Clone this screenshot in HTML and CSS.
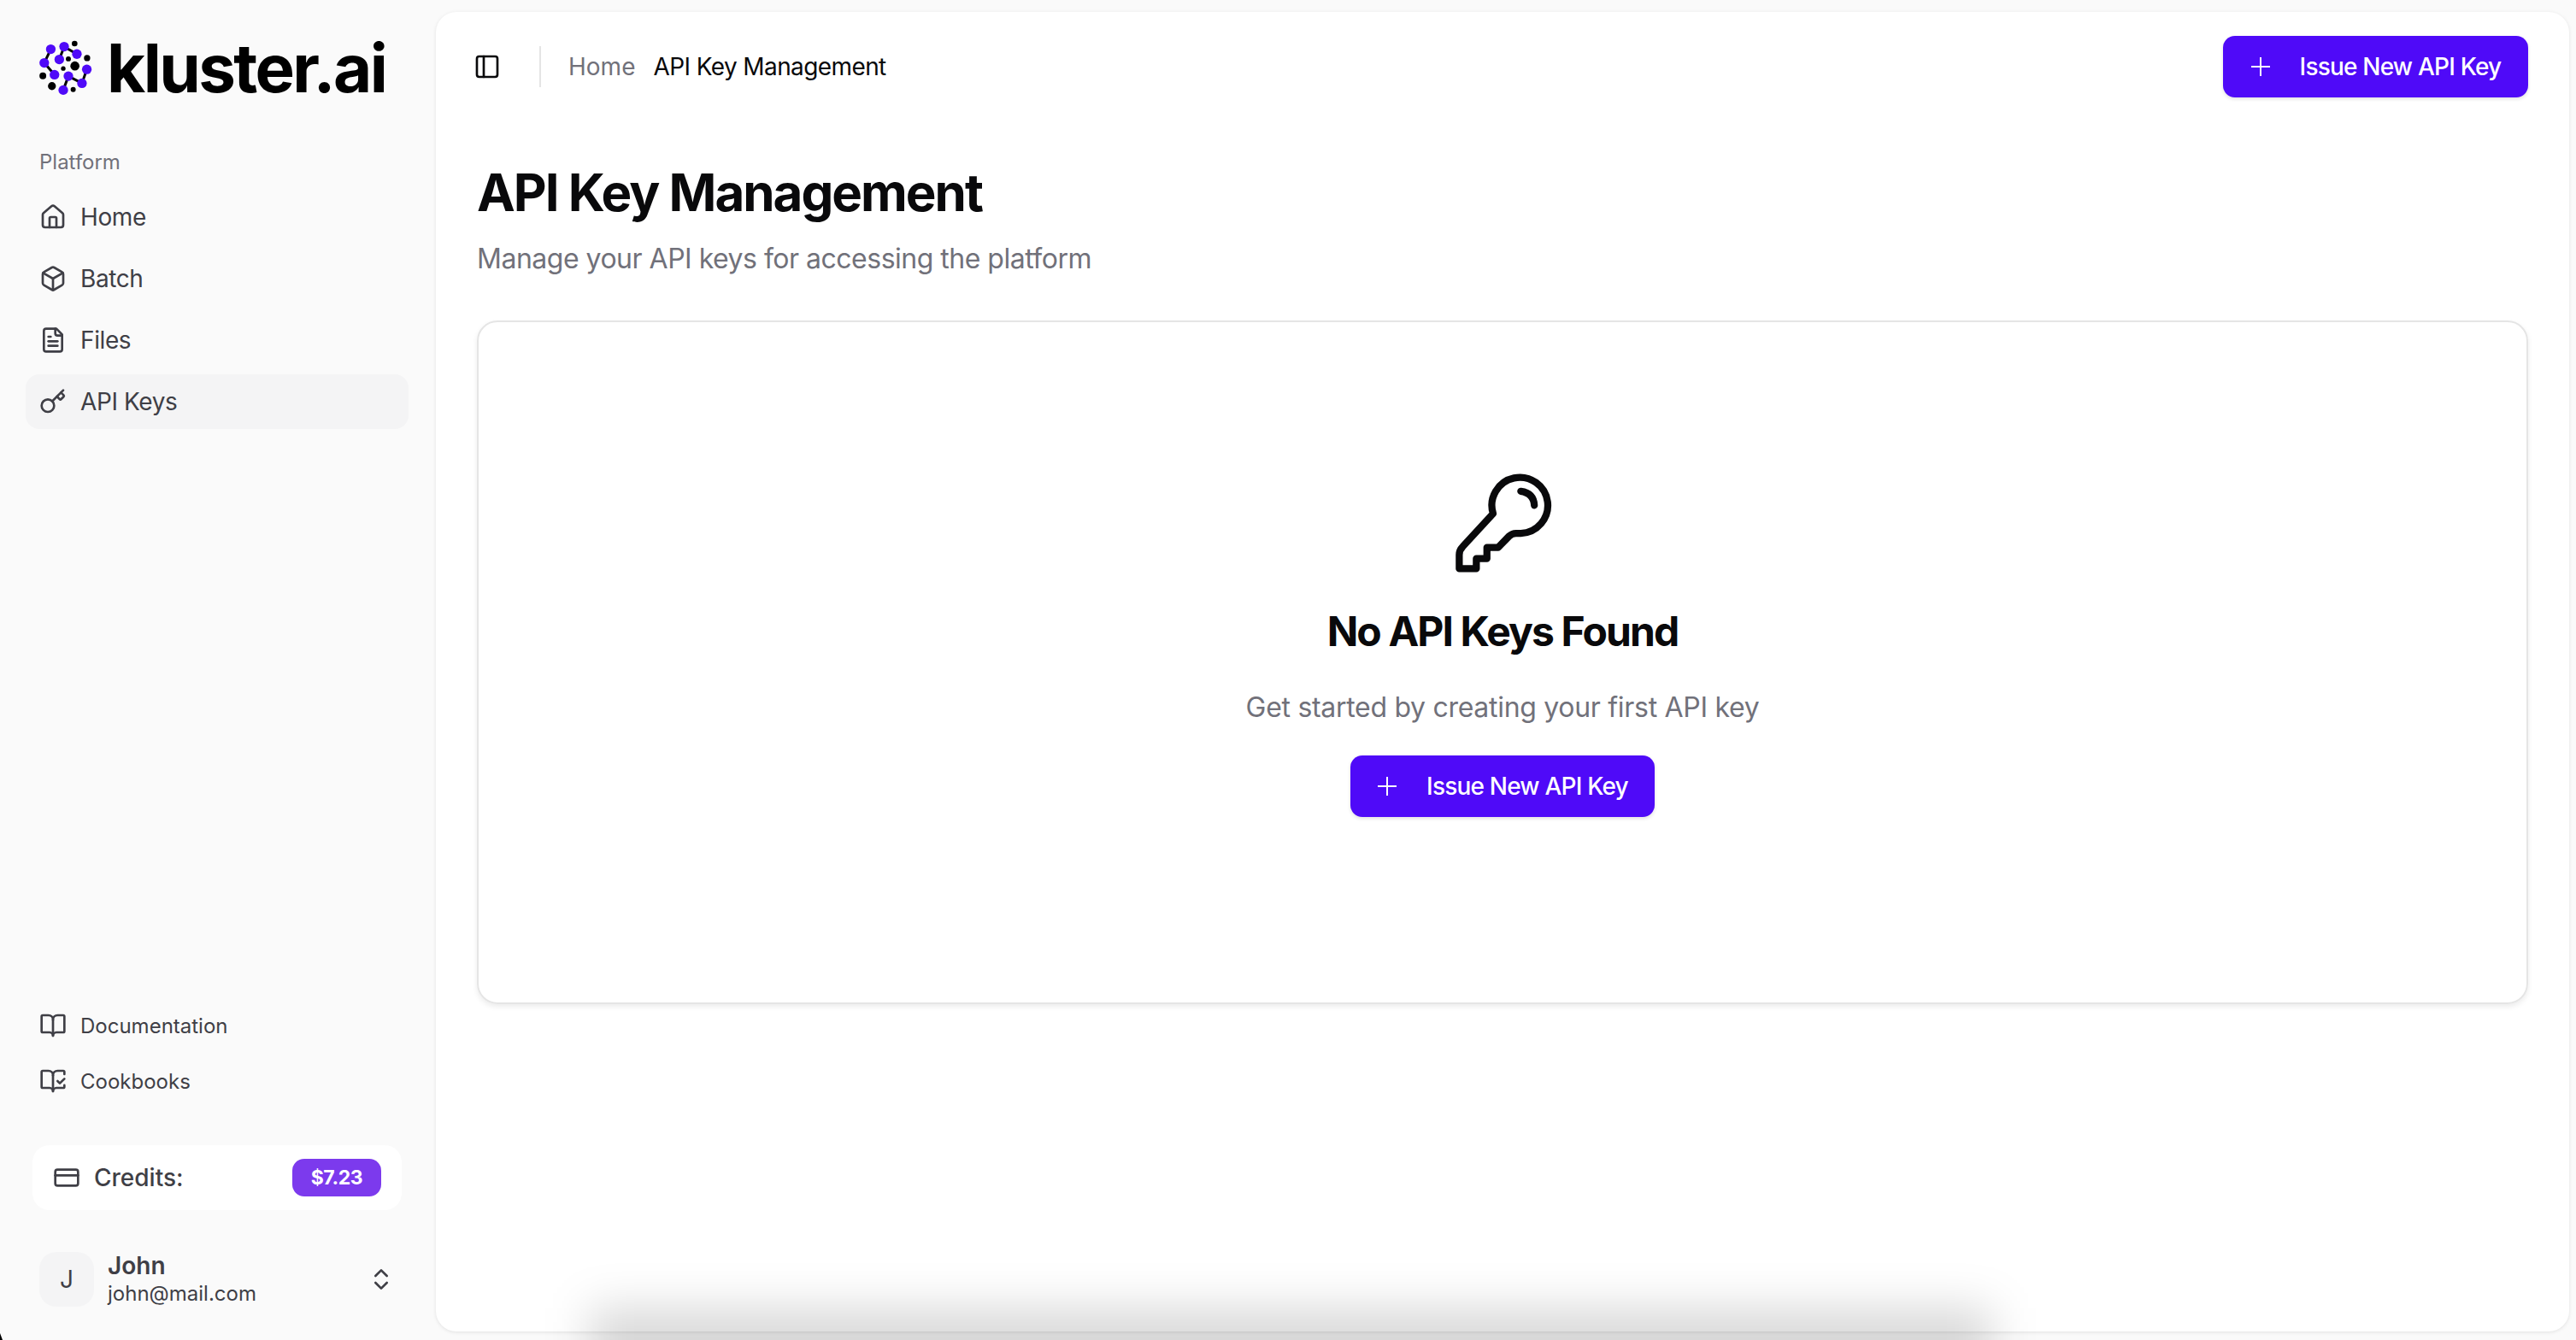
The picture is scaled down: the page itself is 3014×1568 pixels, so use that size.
FILE: index.html
```html
<!DOCTYPE html>
<html lang="en">
<head>
    <meta charset="UTF-8">
    <meta name="viewport" content="width=device-width, initial-scale=1.0">
    <title>API Key Management</title>
    <link rel="stylesheet" href="styles.css">
</head>
<body>
    <div class="app">
        <aside class="sidebar">
            <div class="brand">
                <svg class="brand-mark" viewBox="30 30 240 220">
                    <g stroke="#000" stroke-width="9" fill="none">
                        <path d="M88 77 65 125 101 167"/>
                        <path d="M118 113 135 68 180 94"/>
                        <path d="M132 221 150 172 198 197 215 148"/>
                    </g>
                    <g fill="#000">
                        <circle cx="172" cy="57" r="10"/>
                        <circle cx="216" cy="108" r="11"/>
                        <circle cx="150" cy="111" r="9"/>
                        <circle cx="173" cy="136" r="16"/>
                        <circle cx="132" cy="145" r="8"/>
                        <circle cx="60" cy="171" r="12"/>
                        <circle cx="92" cy="207" r="14"/>
                        <circle cx="167" cy="219" r="9"/>
                    </g>
                    <g fill="#4f0af8">
                        <circle cx="88" cy="77" r="17"/>
                        <circle cx="135" cy="68" r="17"/>
                        <circle cx="180" cy="94" r="17"/>
                        <circle cx="118" cy="113" r="17"/>
                        <circle cx="65" cy="125" r="17"/>
                        <circle cx="101" cy="167" r="17"/>
                        <circle cx="150" cy="172" r="17"/>
                        <circle cx="215" cy="148" r="17"/>
                        <circle cx="198" cy="197" r="17"/>
                        <circle cx="132" cy="221" r="17"/>
                    </g>
                </svg>
                <span class="brand-name">kluster.ai</span>
            </div>

            <div class="nav-label">Platform</div>
            <nav class="nav">
                <a class="nav-item">
                    <svg class="icon" viewBox="0 0 24 24"><path d="M15 21v-8a1 1 0 0 0-1-1h-4a1 1 0 0 0-1 1v8"/><path d="M3 10a2 2 0 0 1 .709-1.528l7-5.999a2 2 0 0 1 2.582 0l7 5.999A2 2 0 0 1 21 10v9a2 2 0 0 1-2 2H5a2 2 0 0 1-2-2z"/></svg>
                    Home
                </a>
                <a class="nav-item">
                    <svg class="icon" viewBox="0 0 24 24"><path d="M21 8a2 2 0 0 0-1-1.73l-7-4a2 2 0 0 0-2 0l-7 4A2 2 0 0 0 3 8v8a2 2 0 0 0 1 1.73l7 4a2 2 0 0 0 2 0l7-4A2 2 0 0 0 21 16Z"/><path d="m3.3 7 8.7 5 8.7-5"/><path d="M12 22V12"/></svg>
                    Batch
                </a>
                <a class="nav-item">
                    <svg class="icon" viewBox="0 0 24 24"><path d="M15 2H6a2 2 0 0 0-2 2v16a2 2 0 0 0 2 2h12a2 2 0 0 0 2-2V7Z"/><path d="M14 2v4a2 2 0 0 0 2 2h4"/><path d="M10 9H8"/><path d="M16 13H8"/><path d="M16 17H8"/></svg>
                    Files
                </a>
                <a class="nav-item active">
                    <svg class="icon" viewBox="0 0 24 24"><path d="m15.5 7.5 2.3 2.3a1 1 0 0 0 1.4 0l2.1-2.1a1 1 0 0 0 0-1.4L19 4"/><path d="m21 2-9.6 9.6"/><circle cx="7.5" cy="15.5" r="5.5"/></svg>
                    API Keys
                </a>
            </nav>

            <div class="links">
                <a class="link-item">
                    <svg class="icon" viewBox="0 0 24 24"><path d="M12 7v14"/><path d="M3 18a1 1 0 0 1-1-1V4a1 1 0 0 1 1-1h5a4 4 0 0 1 4 4 4 4 0 0 1 4-4h5a1 1 0 0 1 1 1v13a1 1 0 0 1-1 1h-6a3 3 0 0 0-3 3 3 3 0 0 0-3-3z"/></svg>
                    Documentation
                </a>
                <a class="link-item">
                    <svg class="icon" viewBox="0 0 24 24"><path d="M12 21V7"/><path d="m16 12 2 2 4-4"/><path d="M22 6V4a1 1 0 0 0-1-1h-5a4 4 0 0 0-4 4 4 4 0 0 0-4-4H3a1 1 0 0 0-1 1v13a1 1 0 0 0 1 1h6a3 3 0 0 1 3 3 3 3 0 0 1 3-3h6a1 1 0 0 0 1-1v-1.3"/></svg>
                    Cookbooks
                </a>
            </div>

            <div class="credits">
                <svg class="icon" viewBox="0 0 24 24"><rect x="2" y="5" width="20" height="14" rx="2"/><path d="M2 10h20"/></svg>
                <span class="credits-label">Credits:</span>
                <span class="credits-badge">$7.23</span>
            </div>

            <div class="user">
                <div class="avatar">J</div>
                <div class="user-info">
                    <div class="user-name">John</div>
                    <div class="user-mail">john@mail.com</div>
                </div>
                <svg class="icon" viewBox="0 0 24 24"><path d="m7 15 5 5 5-5"/><path d="m7 9 5-5 5 5"/></svg>
            </div>
        </aside>

        <main class="main">
            <header class="topbar">
                <svg class="icon panel-icon" viewBox="0 0 24 24"><rect x="3" y="3" width="18" height="18" rx="2"/><path d="M9 3v18"/></svg>
                <div class="divider"></div>
                <div class="crumbs">
                    <span class="crumb-home">Home</span>
                    <span class="crumb-current">API Key Management</span>
                </div>
                <button class="btn btn-top">
                    <svg class="btn-plus" viewBox="0 0 24 24"><path d="M12 1v22"/><path d="M1 12h22"/></svg>
                    Issue New API Key
                </button>
            </header>

            <section class="content">
                <h1 class="title">API Key Management</h1>
                <p class="subtitle">Manage your API keys for accessing the platform</p>

                <div class="empty-card">
                    <svg class="empty-key" viewBox="740 90 360 360">
                        <path d="M888 238 785 350q-12 12-12 28v47h58v-34h36v-38h38l37-38q10-10 24-10h16a95 95 0 1 0-94-67z"/>
                        <path d="M982 162q44 6 46 48"/>
                    </svg>
                    <h2 class="empty-title">No API Keys Found</h2>
                    <p class="empty-text">Get started by creating your first API key</p>
                    <button class="btn btn-empty">
                        <svg class="btn-plus" viewBox="0 0 24 24"><path d="M12 1v22"/><path d="M1 12h22"/></svg>
                        Issue New API Key
                    </button>
                </div>
            </section>
        </main>
    </div>
    <div class="bottom-shadow"></div>
    <div class="window-corner"></div>
</body>
</html>
```

FILE: styles.css
```css
html, body {
    margin: 0;
    height: 100%;
    overflow: hidden;
}

body {
    background-color: #fafafa;
    color: #09090b;
    font-family: Inter, "Noto Sans", sans-serif;
}

.app {
    display: flex;
    height: 1568px;
}

.icon {
    width: 32px;
    height: 32px;
    flex: none;
    fill: none;
    stroke: #3f3f46;
    stroke-width: 2;
    stroke-linecap: round;
    stroke-linejoin: round;
}

/* sidebar */
.sidebar {
    width: 510px;
    flex: none;
    display: flex;
    flex-direction: column;
    box-sizing: border-box;
    padding: 44px 32px 38px 30px;
}

.brand {
    display: flex;
    align-items: center;
    gap: 5px;
    height: 68px;
    padding-left: 10px;
}

.brand-mark {
    width: 80px;
    height: 73px;
    flex: none;
}

.brand-name {
    font-size: 78px;
    line-height: 68px;
    font-weight: 700;
    letter-spacing: -2.6px;
    color: #000;
    padding-top: 3px;
}

.nav-label {
    margin-top: 60px;
    padding-left: 16px;
    font-size: 24px;
    line-height: 36px;
    color: #71717a;
}

.nav {
    display: flex;
    flex-direction: column;
    gap: 8px;
    margin-top: 14px;
}

.nav-item {
    display: flex;
    align-items: center;
    gap: 16px;
    height: 64px;
    padding-left: 16px;
    border-radius: 16px;
    font-size: 28px;
    letter-spacing: -0.4px;
    color: #3f3f46;
}

.nav-item.active {
    background-color: #f4f4f5;
}

.links {
    display: flex;
    flex-direction: column;
    gap: 1px;
    margin-top: auto;
}

.link-item {
    display: flex;
    align-items: center;
    gap: 16px;
    height: 64px;
    padding-left: 16px;
    font-size: 24px;
    color: #3f3f46;
}

.credits {
    display: flex;
    align-items: center;
    gap: 16px;
    height: 76px;
    margin: 43px 8px 0;
    padding: 0 24px;
    background-color: #fff;
    border-radius: 20px;
}

.credits-label {
    font-size: 28px;
    font-weight: 500;
    color: #3f3f46;
}

.credits-badge {
    margin-left: auto;
    width: 104px;
    height: 44px;
    line-height: 44px;
    text-align: center;
    background-color: #7c3aed;
    border-radius: 14px;
    color: #fff;
    font-size: 23px;
    font-weight: 700;
    letter-spacing: -0.4px;
}

.user {
    display: flex;
    align-items: center;
    gap: 16px;
    margin-top: 48px;
    padding: 0 16px;
}

.avatar {
    width: 64px;
    height: 64px;
    flex: none;
    display: flex;
    align-items: center;
    justify-content: center;
    background-color: #f4f4f5;
    border-radius: 20px;
    font-size: 28px;
    color: #3f3f46;
}

.user-info {
    flex: 1;
}

.user-name {
    font-size: 28px;
    line-height: 34px;
    font-weight: 600;
    color: #3f3f46;
}

.user-mail {
    font-size: 24px;
    line-height: 32px;
    color: #3f3f46;
}

/* main panel */
.main {
    flex: 1;
    height: 1544px;
    margin: 14px 8px 0 0;
    box-sizing: border-box;
    background-color: #fff;
    border-radius: 24px;
    box-shadow: 0 1px 4px rgba(0, 0, 0, 0.1);
}

.topbar {
    display: flex;
    align-items: center;
    height: 72px;
    padding: 28px 48px 0 44px;
}

.panel-icon {
    stroke: #09090b;
}

.divider {
    width: 2px;
    height: 48px;
    margin: 0 32px 0 45px;
    background-color: #e5e5e5;
}

.crumbs {
    display: flex;
    gap: 21px;
    font-size: 28px;
}

.crumb-home {
    color: #71717a;
}

.crumb-current {
    letter-spacing: -0.6px;
}

.btn {
    display: flex;
    align-items: center;
    justify-content: center;
    gap: 34px;
    height: 72px;
    padding: 0;
    border: none;
    border-radius: 14px;
    background-color: #4f0af8;
    color: #fff;
    font-family: inherit;
    font-size: 28px;
    font-weight: 500;
    letter-spacing: -0.8px;
    box-shadow: 0 2px 4px rgba(0, 0, 0, 0.12);
}

.btn-top {
    width: 357px;
    margin-left: auto;
}

.btn-plus {
    width: 24px;
    height: 24px;
    fill: none;
    stroke: #fff;
    stroke-width: 2;
}

.content {
    padding: 0 48px;
}

.title {
    margin: 75px 0 0;
    font-size: 60px;
    line-height: 72px;
    font-weight: 700;
    letter-spacing: -2px;
}

.subtitle {
    margin: 20px 0 0;
    font-size: 32px;
    line-height: 44px;
    letter-spacing: -0.5px;
    color: #71717a;
}

.empty-card {
    display: flex;
    flex-direction: column;
    align-items: center;
    box-sizing: border-box;
    height: 800px;
    margin-top: 50px;
    padding-top: 173px;
    border: 2px solid #e5e5e5;
    border-radius: 24px;
    box-shadow: 0 3px 6px rgba(0, 0, 0, 0.08);
}

.empty-key {
    width: 124px;
    height: 124px;
    fill: none;
    stroke: #09090b;
    stroke-width: 24;
    stroke-linecap: round;
    stroke-linejoin: round;
}

.empty-title {
    margin: 35px 0 0;
    font-size: 48px;
    line-height: 60px;
    font-weight: 700;
    letter-spacing: -1.9px;
}

.empty-text {
    margin: 37px 0 0;
    font-size: 32px;
    line-height: 44px;
    letter-spacing: -0.3px;
    color: #71717a;
}

.btn-empty {
    width: 356px;
    margin-top: 34px;
}

/* soft shadow left by the capture along the lower edge */
.bottom-shadow {
    position: fixed;
    left: 690px;
    top: 1530px;
    width: 1640px;
    height: 80px;
    background-color: rgba(0, 0, 0, 0.15);
    filter: blur(26px);
    pointer-events: none;
}

.window-corner {
    position: fixed;
    left: 0;
    bottom: 0;
    width: 3px;
    height: 8px;
    background-color: #000;
    clip-path: polygon(0 0, 100% 100%, 0 100%);
}
```
